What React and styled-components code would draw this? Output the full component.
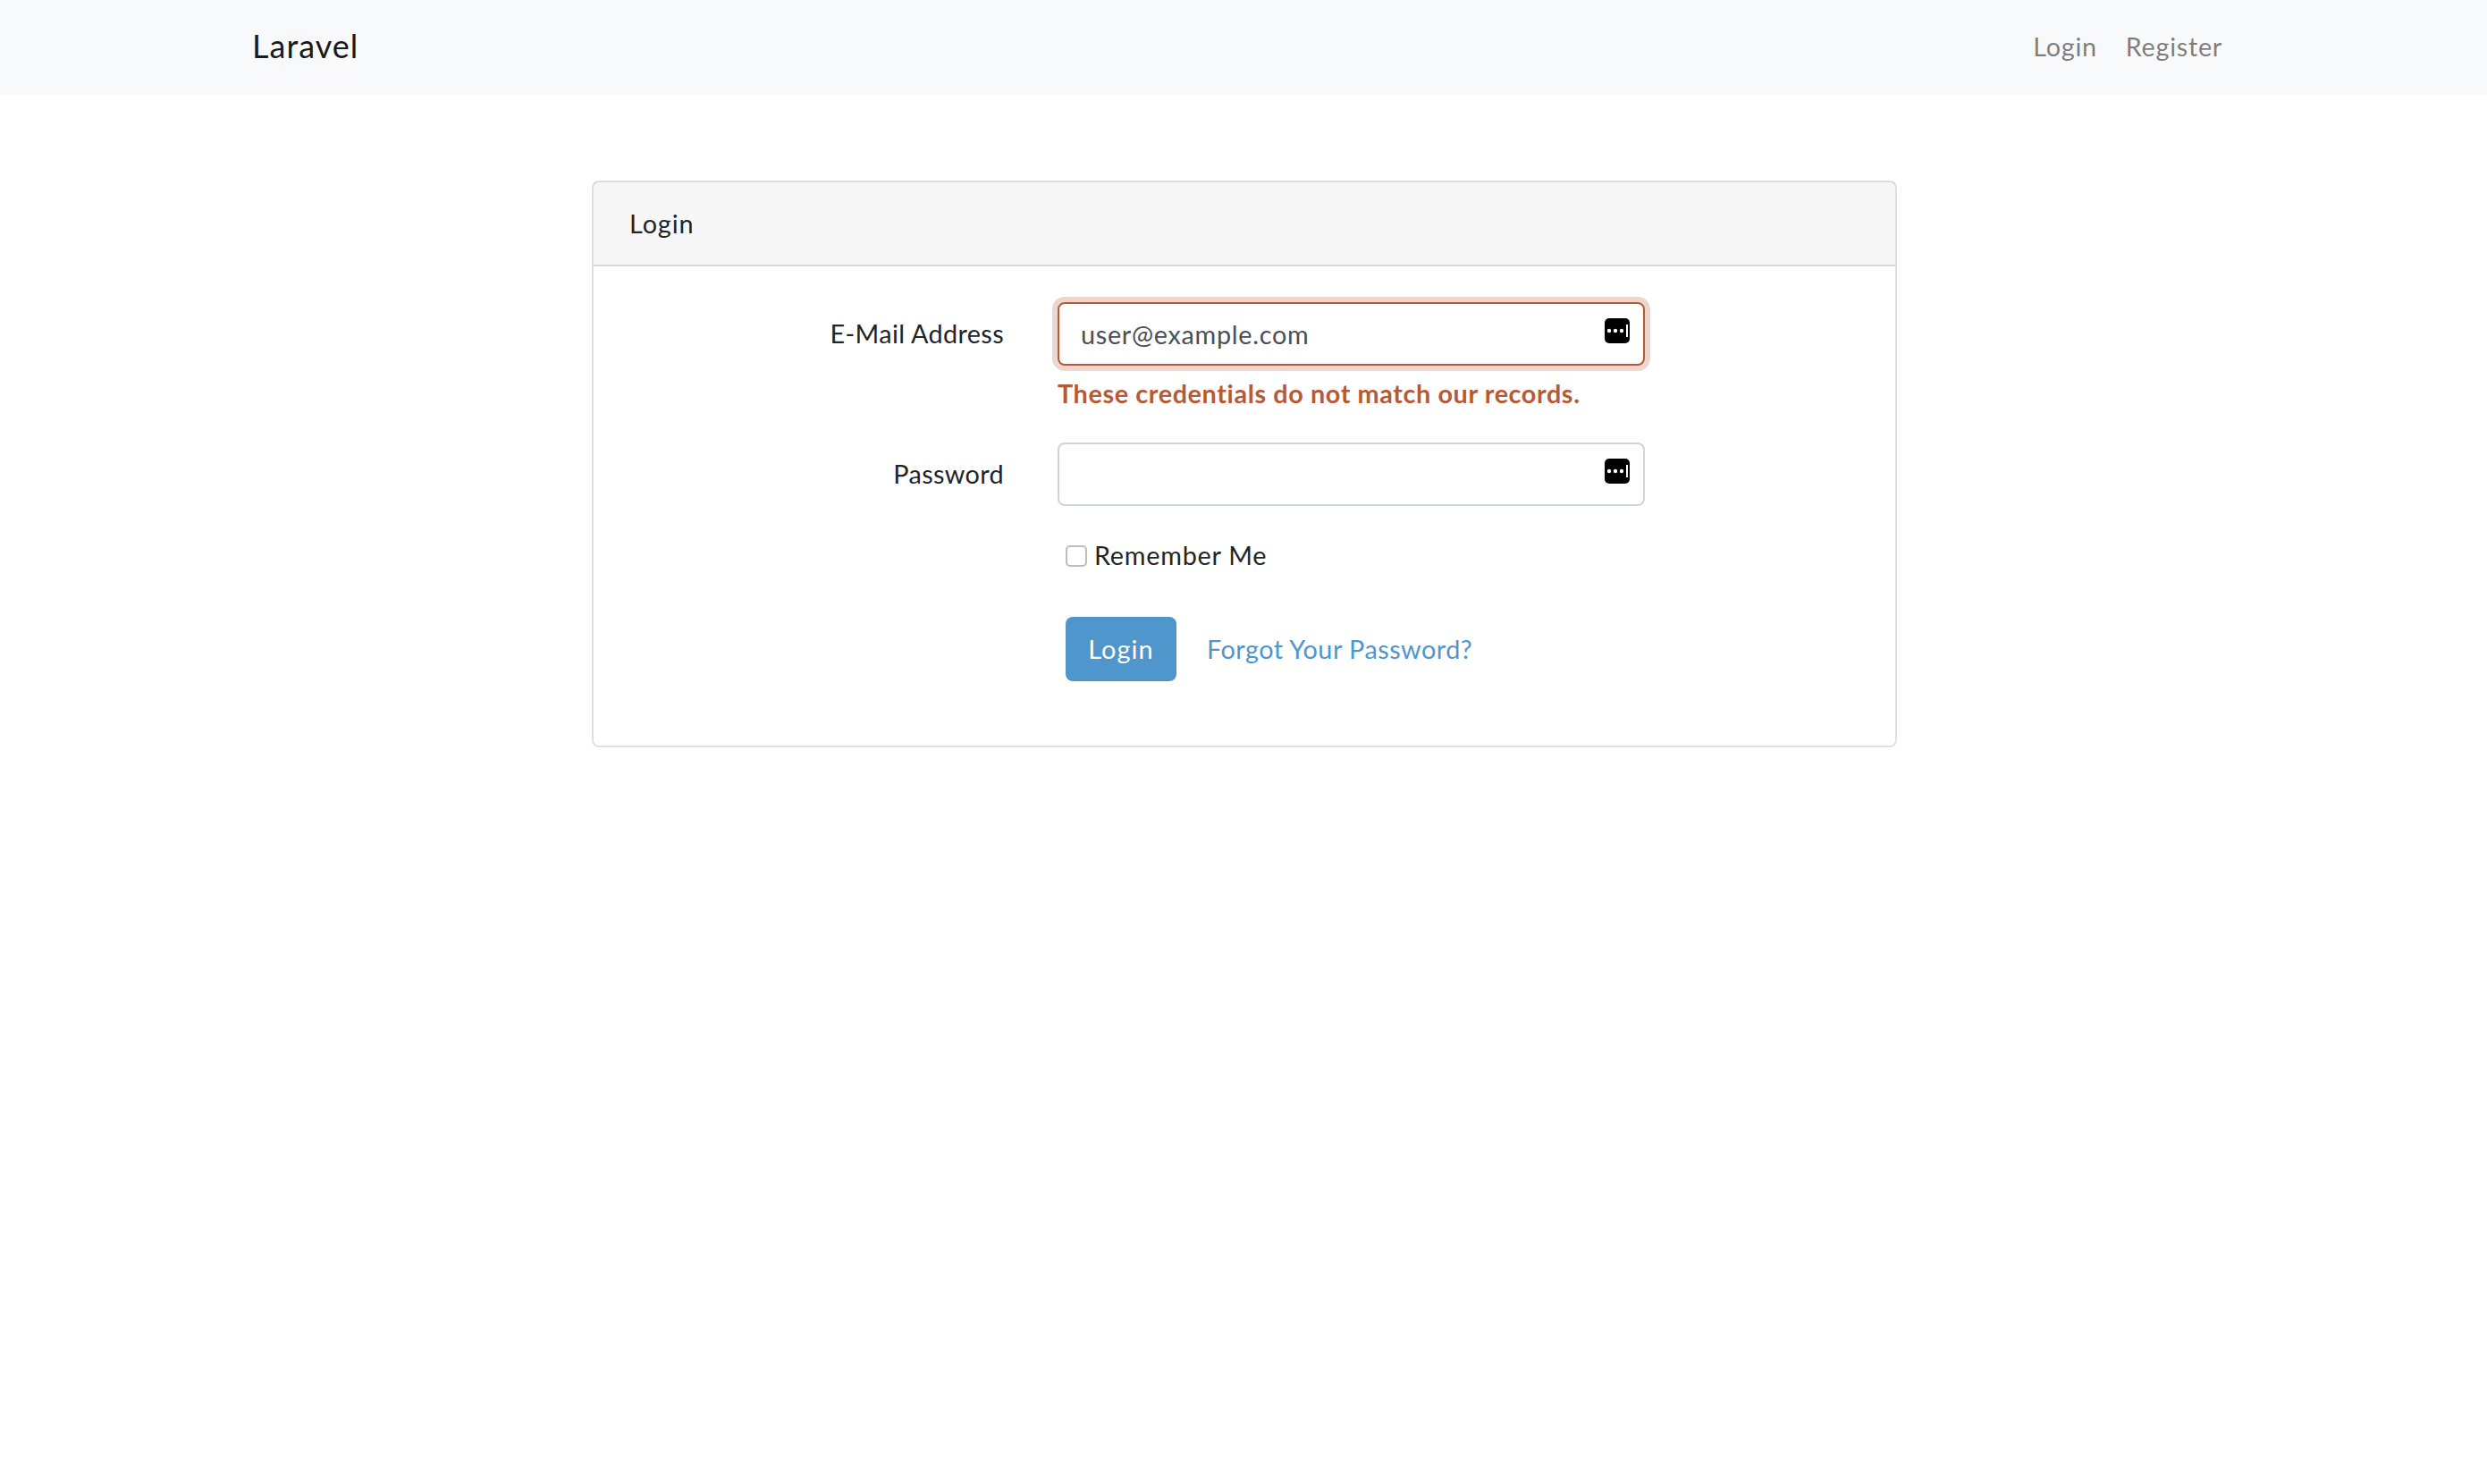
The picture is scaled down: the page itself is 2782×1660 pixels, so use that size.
import styled, { createGlobalStyle } from 'styled-components'

const GlobalStyle = createGlobalStyle`
  body {
    margin: 0;
    background: #fff;
    color: #212529;
    font-family: 'Lato', 'Liberation Sans', sans-serif;
    font-size: 28.8px;
    line-height: 1.6;
  }
`

const Navbar = styled.nav`
  height: 106px;
  box-sizing: border-box;
  padding: 0 0 2px 2px;
  background: #f8f9fa;
`

const NavInner = styled.div`
  width: 2220px;
  height: 100%;
  margin: 0 auto;
  display: flex;
  align-items: center;
  justify-content: space-between;
`

const Brand = styled.a`
  font-size: 36px;
  color: #1a1a1a;
  letter-spacing: 1px;
`

const NavLinks = styled.div`
  display: flex;
  padding-right: 16px;
  gap: 32px;
`

const NavLink = styled.a`
  color: rgba(0, 0, 0, 0.5);
  letter-spacing: 0.7px;
`

const Main = styled.main`
  padding: 96px 0 96px 2px;
`

const Card = styled.div`
  width: 1460px;
  margin: 0 auto;
  box-sizing: border-box;
  border: 2px solid rgba(0, 0, 0, 0.125);
  border-radius: 8px;
`

const CardHeader = styled.div`
  padding: 23px 40px;
  background: rgba(0, 0, 0, 0.03);
  border-bottom: 2px solid rgba(0, 0, 0, 0.125);
  letter-spacing: 0.9px;
`

const CardBody = styled.div`
  padding: 40px;
`

const FormRow = styled.div`
  display: grid;
  grid-template-columns: 419px 657px;
  column-gap: 60px;
  margin-bottom: ${props => props.$mb || 32}px;
`

const Label = styled.label`
  text-align: right;
  line-height: 71px;
  letter-spacing: 0.35px;
`

const InputWrap = styled.div`
  position: relative;
`

const Input = styled.input`
  display: block;
  width: 100%;
  height: 71px;
  box-sizing: border-box;
  padding: 0 24px;
  border: 2px solid ${props => (props.$invalid ? '#b65a36' : '#ced4da')};
  border-radius: 8px;
  box-shadow: ${props => (props.$invalid ? '0 0 0 6px rgba(182, 90, 54, 0.25)' : 'none')};
  outline: none;
  color: #495057;
  font: inherit;
  letter-spacing: 0.7px;
`

const KeyIcon = styled.svg`
  position: absolute;
  top: 18px;
  right: 17px;
  width: 28px;
  height: 28px;
`

const Feedback = styled.div`
  margin-top: 8px;
  color: #b65a36;
  font-weight: 700;
  letter-spacing: 0.6px;
`

const Offset = styled.div`
  grid-column: 2;
  padding-left: 9px;
`

const CheckLabel = styled.label`
  display: flex;
  align-items: center;
  height: 46px;
  gap: 8px;
  letter-spacing: 0.75px;
`

const Checkbox = styled.span`
  width: 24px;
  height: 24px;
  box-sizing: border-box;
  border: 2px solid #bdbdbd;
  border-radius: 5px;
  background: #fff;
  margin-top: 2px;
`

const Actions = styled.div`
  display: flex;
  align-items: center;
  gap: 34px;
`

const Button = styled.button`
  width: 124px;
  height: 72px;
  border: 0;
  border-radius: 8px;
  background: #4f96cc;
  color: #fff;
  font: inherit;
  letter-spacing: 1.1px;
`

const Link = styled.a`
  color: #4f96cc;
  letter-spacing: 0.48px;
`

const PasswordIcon = () => (
  <KeyIcon viewBox="0 0 28 28">
    <rect width="28" height="28" rx="5" fill="#000" />
    <circle cx="5" cy="14" r="2.2" fill="#fff" />
    <circle cx="12" cy="14" r="2.2" fill="#fff" />
    <circle cx="19" cy="14" r="2.2" fill="#fff" />
    <rect x="24" y="7" width="2" height="14" fill="#fff" />
  </KeyIcon>
)

export default function App() {
  return (
    <>
      <GlobalStyle />
      <Navbar>
        <NavInner>
          <Brand>Laravel</Brand>
          <NavLinks>
            <NavLink>Login</NavLink>
            <NavLink>Register</NavLink>
          </NavLinks>
        </NavInner>
      </Navbar>
      <Main>
        <Card>
          <CardHeader>Login</CardHeader>
          <CardBody>
            <FormRow>
              <Label>E-Mail Address</Label>
              <div>
                <InputWrap>
                  <Input $invalid type="email" defaultValue="user@example.com" />
                  <PasswordIcon />
                </InputWrap>
                <Feedback>These credentials do not match our records.</Feedback>
              </div>
            </FormRow>
            <FormRow>
              <Label>Password</Label>
              <InputWrap>
                <Input type="password" />
                <PasswordIcon />
              </InputWrap>
            </FormRow>
            <FormRow $mb={46}>
              <Offset>
                <CheckLabel>
                  <Checkbox />
                  Remember Me
                </CheckLabel>
              </Offset>
            </FormRow>
            <FormRow>
              <Offset>
                <Actions>
                  <Button>Login</Button>
                  <Link>Forgot Your Password?</Link>
                </Actions>
              </Offset>
            </FormRow>
          </CardBody>
        </Card>
      </Main>
    </>
  )
}
